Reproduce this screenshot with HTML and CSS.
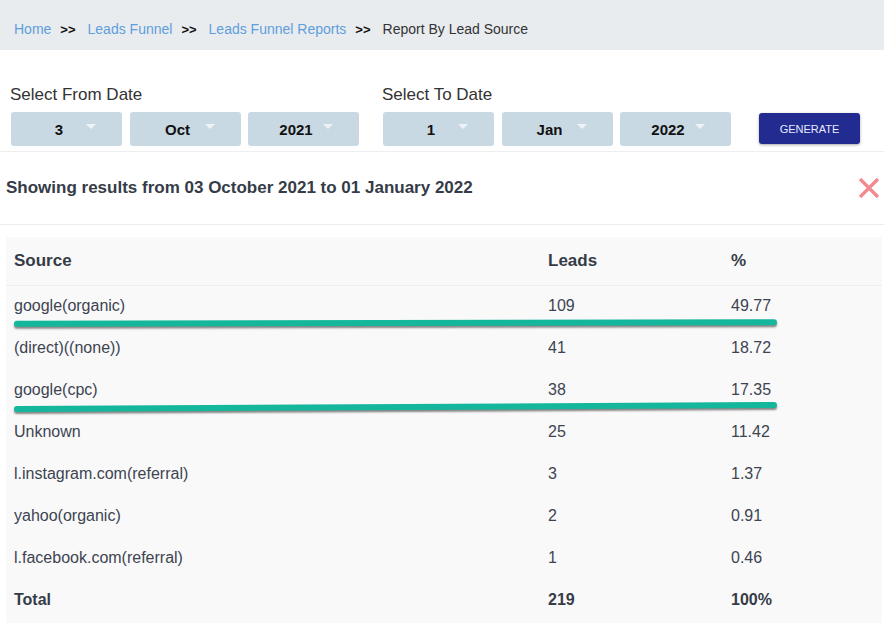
FILE: index.html
```html
<!DOCTYPE html>
<html lang="en">
<head>
<meta charset="utf-8">
<title>Report By Lead Source</title>
<link rel="stylesheet" href="styles.css">
</head>
<body>
<nav class="breadcrumb">
  <a class="crumb-link" href="#">Home</a><span class="sep">&gt;&gt;</span>
  <a class="crumb-link" href="#">Leads Funnel</a><span class="sep">&gt;&gt;</span>
  <a class="crumb-link" href="#">Leads Funnel Reports</a><span class="sep">&gt;&gt;</span>
  <span class="crumb-current">Report By Lead Source</span>
</nav>

<section class="filters">
  <div class="date-group">
    <div class="date-label">Select From Date</div>
    <div class="selects">
      <div class="select"><span class="select-value">3</span><span class="caret"></span></div>
      <div class="select"><span class="select-value">Oct</span><span class="caret"></span></div>
      <div class="select"><span class="select-value">2021</span><span class="caret"></span></div>
    </div>
  </div>
  <div class="date-group">
    <div class="date-label">Select To Date</div>
    <div class="selects">
      <div class="select"><span class="select-value">1</span><span class="caret"></span></div>
      <div class="select"><span class="select-value">Jan</span><span class="caret"></span></div>
      <div class="select"><span class="select-value">2022</span><span class="caret"></span></div>
    </div>
  </div>
  <button class="generate">GENERATE</button>
</section>

<section class="results-head">
  <h2 class="results-title">Showing results from 03 October 2021 to 01 January 2022</h2>
  <svg class="close-icon" width="22" height="22" viewBox="0 0 22 22" aria-hidden="true">
    <path d="M2 2 L20 20 M20 2 L2 20" stroke="#f2898f" stroke-width="3.2" stroke-linecap="butt" fill="none"/>
  </svg>
</section>

<div class="table-wrap">
  <table class="report">
    <thead>
      <tr><th class="col-source">Source</th><th class="col-leads">Leads</th><th>%</th></tr>
    </thead>
    <tbody>
      <tr><td class="marked">google(organic)<span class="mark mark-a"></span></td><td>109</td><td>49.77</td></tr>
      <tr><td>(direct)((none))</td><td>41</td><td>18.72</td></tr>
      <tr><td class="marked">google(cpc)<span class="mark mark-b"></span></td><td>38</td><td>17.35</td></tr>
      <tr><td>Unknown</td><td>25</td><td>11.42</td></tr>
      <tr><td>l.instagram.com(referral)</td><td>3</td><td>1.37</td></tr>
      <tr><td>yahoo(organic)</td><td>2</td><td>0.91</td></tr>
      <tr><td>l.facebook.com(referral)</td><td>1</td><td>0.46</td></tr>
      <tr class="total"><td>Total</td><td>219</td><td>100%</td></tr>
    </tbody>
  </table>
</div>
</body>
</html>
```

FILE: styles.css
```css
* { box-sizing: border-box; }

body {
  margin: 0;
  background: #ffffff;
  font-family: "Liberation Sans", Arial, Helvetica, sans-serif;
  color: #333;
}

.breadcrumb {
  height: 50px;
  background: #e9ecef;
  display: flex;
  align-items: center;
  padding: 8px 0 0 14px;
  font-size: 14px;
}

.crumb-link {
  color: #5e9edc;
  text-decoration: none;
}

.sep {
  color: #111;
  font-weight: bold;
  font-size: 13px;
  margin: 0 12px 0 9px;
}

.crumb-current {
  color: #333;
}

.filters {
  display: flex;
  align-items: flex-end;
  padding: 35px 0 5px 11px;
  border-bottom: 1px solid #eeeeee;
}

.date-group {
  display: flex;
  flex-direction: column;
  margin-right: 24px;
}

.date-label {
  font-size: 17px;
  line-height: 20px;
  color: #333;
  margin: 0 0 7px -1px;
}

.selects {
  display: flex;
  gap: 7.5px;
}

.select {
  width: 111px;
  height: 34px;
  background: #c9d9e3;
  border-radius: 3px;
  display: flex;
  align-items: center;
  justify-content: center;
  padding-left: 2px;
}

.select-value {
  width: 40px;
  text-align: center;
  font-weight: bold;
  font-size: 15px;
  color: #111;
}

.caret {
  width: 0;
  height: 0;
  margin-left: 7px;
  margin-top: -5px;
  border-left: 5px solid transparent;
  border-right: 5px solid transparent;
  border-top: 5px solid #eef3f7;
}

.generate {
  margin: 0 0 2px 4px;
  width: 101px;
  height: 31px;
  border: none;
  border-radius: 3px;
  background: #222b8f;
  color: #e8eaff;
  font-family: inherit;
  font-size: 11px;
  box-shadow: 0 1px 3px rgba(0, 0, 0, 0.35);
}

.results-head {
  height: 73px;
  display: flex;
  align-items: center;
  justify-content: space-between;
  padding: 0 4px 0 6px;
  border-bottom: 1px solid #ececec;
}

.results-title {
  margin: 0;
  font-size: 17px;
  font-weight: bold;
  color: #353c47;
}

.close-icon {
  display: block;
}

.table-wrap {
  margin: 12px 2px 0 6px;
  background: #f9f9fa;
  padding-bottom: 2px;
}

.report {
  width: 100%;
  border-collapse: collapse;
  font-size: 16px;
  color: #3d4450;
}

.report th {
  height: 48px;
  text-align: left;
  font-size: 17px;
  font-weight: bold;
  color: #363c46;
  padding: 0 8px;
  border-bottom: 1px solid #eeeeef;
}

.report td {
  height: 42px;
  padding: 0 8px;
}

.col-source { width: 534px; }
.col-leads { width: 183px; }

.report .total td {
  font-weight: bold;
  color: #363c46;
}

.marked {
  position: relative;
}

.mark {
  position: absolute;
  left: 8px;
  width: 763px;
  height: 6px;
  border-radius: 3px;
  background: #14b79b;
  box-shadow: 0 2px 2px rgba(40, 40, 40, 0.55);
}

.mark-a {
  top: 34px;
  transform: rotate(-0.12deg);
}

.mark-b {
  top: 35px;
  transform: rotate(-0.3deg);
}
```
